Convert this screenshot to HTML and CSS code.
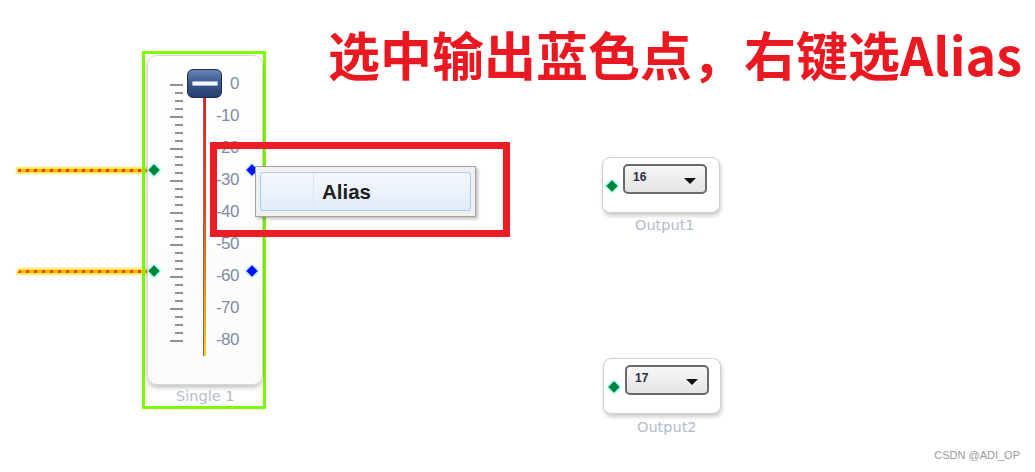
FILE: index.html
```html
<!DOCTYPE html>
<html lang="zh-CN">
<head>
    <meta charset="UTF-8">
    <title>Alias</title>
    <link rel="stylesheet" href="styles.css">
</head>
<body>
    <div class="canvas">
        <h1 class="title">选中输出蓝色点，右键选Alias</h1>

        <!-- wires into the slider -->
        <div class="wire wire-1"></div>
        <div class="wire wire-2"></div>

        <!-- slider block, selected -->
        <div class="selection"></div>
        <div class="slider">
            <div class="slider-body">
                <div class="ticks"></div>
                <div class="track"></div>
                <div class="scale">
                    <span>0</span>
                    <span>-10</span>
                    <span>-20</span>
                    <span>-30</span>
                    <span>-40</span>
                    <span>-50</span>
                    <span>-60</span>
                    <span>-70</span>
                    <span>-80</span>
                </div>
            </div>
            <div class="handle"><span></span></div>
        </div>
        <div class="node-label single-label">Single 1</div>

        <div class="pin pin-in pin-a"></div>
        <div class="pin pin-in pin-b"></div>
        <div class="pin pin-out pin-c"></div>
        <div class="pin pin-out pin-d"></div>

        <!-- highlight + context menu -->
        <div class="highlight"></div>
        <div class="menu">
            <div class="menu-item">
                <span class="gutter"></span>
                <span class="menu-text">Alias</span>
            </div>
        </div>

        <!-- outputs -->
        <div class="output output-1">
            <div class="select"><span>16</span><i class="arrow"></i></div>
        </div>
        <div class="node-label out-label-1">Output1</div>
        <div class="pin pin-in pin-e"></div>

        <div class="output output-2">
            <div class="select"><span>17</span><i class="arrow"></i></div>
        </div>
        <div class="node-label out-label-2">Output2</div>
        <div class="pin pin-in pin-f"></div>

        <div class="watermark">CSDN @ADI_OP</div>
    </div>
</body>
</html>
```

FILE: styles.css
```css
body {
    margin: 0;
    padding: 0;
    background-color: #fff;
    font-family: "Liberation Sans", Arial, sans-serif;
}
.canvas {
    position: relative;
    width: 1035px;
    height: 472px;
    overflow: hidden;
    background-color: #fff;
}
.title {
    position: absolute;
    left: 328px;
    top: 21px;
    margin: 0;
    font-family: "Noto Sans CJK SC", sans-serif;
    font-weight: 700;
    font-size: 52px;
    line-height: 66px;
    color: #ea1921;
    white-space: nowrap;
}

/* wires */
.wire {
    position: absolute;
    left: 18px;
    width: 134px;
    height: 3px;
    background: repeating-linear-gradient(90deg, #f0401a 0 3px, #ffb400 3px 8px);
    box-shadow: 0 0 2px 2px #ffe650;
}
.wire-1 { top: 169px; }
.wire-2 { top: 270px; border-top-left-radius: 3px; }

/* slider */
.selection {
    position: absolute;
    left: 142px;
    top: 51px;
    width: 118px;
    height: 352px;
    border: 3px solid #7dfc00;
}
.slider {
    position: absolute;
    left: 147px;
    top: 55px;
    width: 114px;
    height: 328px;
    border: 1px solid #d6d6d6;
    border-radius: 10px;
    background: linear-gradient(#ffffff, #fbfbfb);
    box-shadow: 0 3px 4px rgba(0, 0, 0, 0.22);
}
.slider-body {
    display: flex;
    padding-left: 22px;
}
.ticks {
    width: 13px;
    height: 260px;
    margin-top: 28px;
    background:
        repeating-linear-gradient(to bottom, #909090 0 2px, transparent 2px 32px) 0 0 / 6px 100% no-repeat,
        repeating-linear-gradient(to bottom, #909090 0 2px, transparent 2px 8px) 5px 0 / 8px 100% no-repeat;
}
.track {
    width: 3px;
    height: 258px;
    margin-top: 42px;
    margin-left: 20px;
    background:
        linear-gradient(#6e6e6e, #6e6e6e) 0 0 / 1px 100% no-repeat,
        linear-gradient(#f01818, #f04a10 45%, #f0a010 80%, #f8d020) 1px 0 / 2px 100% no-repeat;
}
.scale {
    display: flex;
    flex-direction: column;
    width: 27px;
    margin-left: 6px;
    margin-top: 12px;
    text-align: right;
    font-size: 17px;
    letter-spacing: -0.5px;
    color: #7f8ca3;
}
.scale span {
    height: 32px;
    line-height: 32px;
}
.handle {
    position: absolute;
    left: 39px;
    top: 13px;
    width: 33px;
    height: 27px;
    border: 1px solid #1d2d52;
    border-radius: 6px;
    background: linear-gradient(#6682b6, #3a5688 50%, #253f6e);
    display: flex;
    align-items: center;
    justify-content: center;
}
.handle span {
    width: 24px;
    height: 3px;
    background: #f2f4f8;
    border: 1px solid #a9b6cf;
    border-radius: 1px;
}

.node-label {
    position: absolute;
    font-family: "DejaVu Sans", sans-serif;
    font-size: 14.5px;
    color: #b3bccb;
    white-space: nowrap;
}
.single-label { left: 176px; top: 388px; }
.out-label-1 { left: 635px; top: 217px; }
.out-label-2 { left: 637px; top: 419px; }

/* pins */
.pin {
    position: absolute;
    width: 8px;
    height: 8px;
    transform: rotate(45deg);
}
.pin-in {
    background: #00843c;
    box-shadow: 0 0 2px 1px #7fffe8;
}
.pin-out {
    background: #0010ff;
    box-shadow: 0 0 2px 1px #9fe0ff;
}
.pin-a { left: 150px; top: 166px; }
.pin-b { left: 150px; top: 267px; }
.pin-c { left: 248px; top: 166px; }
.pin-d { left: 248px; top: 267px; }
.pin-e { left: 608px; top: 182px; }
.pin-f { left: 610px; top: 383px; }

/* highlight + menu */
.highlight {
    position: absolute;
    left: 210px;
    top: 142px;
    width: 286px;
    height: 81px;
    border: 7px solid #ec1c24;
}
.menu {
    position: absolute;
    left: 255px;
    top: 166px;
    width: 221px;
    height: 51px;
    padding: 5px 4px;
    box-sizing: border-box;
    background: #f0f0f0;
    border: 1px solid #a3a3a3;
    box-shadow: 2px 2px 3px rgba(0, 0, 0, 0.25);
}
.menu-item {
    display: flex;
    align-items: center;
    height: 100%;
    border: 1px solid #a9ccf0;
    border-radius: 3px;
    background: linear-gradient(#f4f8fd, #e2ecf8);
    box-sizing: border-box;
}
.gutter {
    width: 52px;
    height: 100%;
    border-right: 1px solid #dce6f2;
}
.menu-text {
    margin-left: 8px;
    font-weight: 700;
    font-size: 20.5px;
    color: #1e1e1e;
}

/* outputs */
.output {
    position: absolute;
    width: 116px;
    height: 54px;
    border: 1px solid #cfcfcf;
    border-radius: 8px;
    background: #fff;
    box-shadow: 1px 3px 4px rgba(0, 0, 0, 0.2);
}
.output-1 { left: 602px; top: 157px; }
.output-2 { left: 603px; top: 358px; }
.select {
    display: flex;
    align-items: center;
    justify-content: space-between;
    margin: 6px 0 0 20px;
    height: 26px;
    padding: 0 9px 0 8px;
    width: 63px;
    border: 2px solid #6a6a6a;
    border-radius: 5px;
    background: linear-gradient(#f7f7f7, #e4e4e4);
    font-size: 12px;
    font-weight: 700;
    color: #2b2b44;
}
.select span {
    align-self: flex-start;
    margin-top: 4px;
}
.arrow {
    width: 0;
    height: 0;
    margin-top: 4px;
    border-left: 6px solid transparent;
    border-right: 6px solid transparent;
    border-top: 6px solid #111;
}
.output-2 .select { margin-left: 21px; }

.watermark {
    position: absolute;
    right: 15px;
    top: 449px;
    font-size: 11px;
    color: #9a9a9a;
}
```
